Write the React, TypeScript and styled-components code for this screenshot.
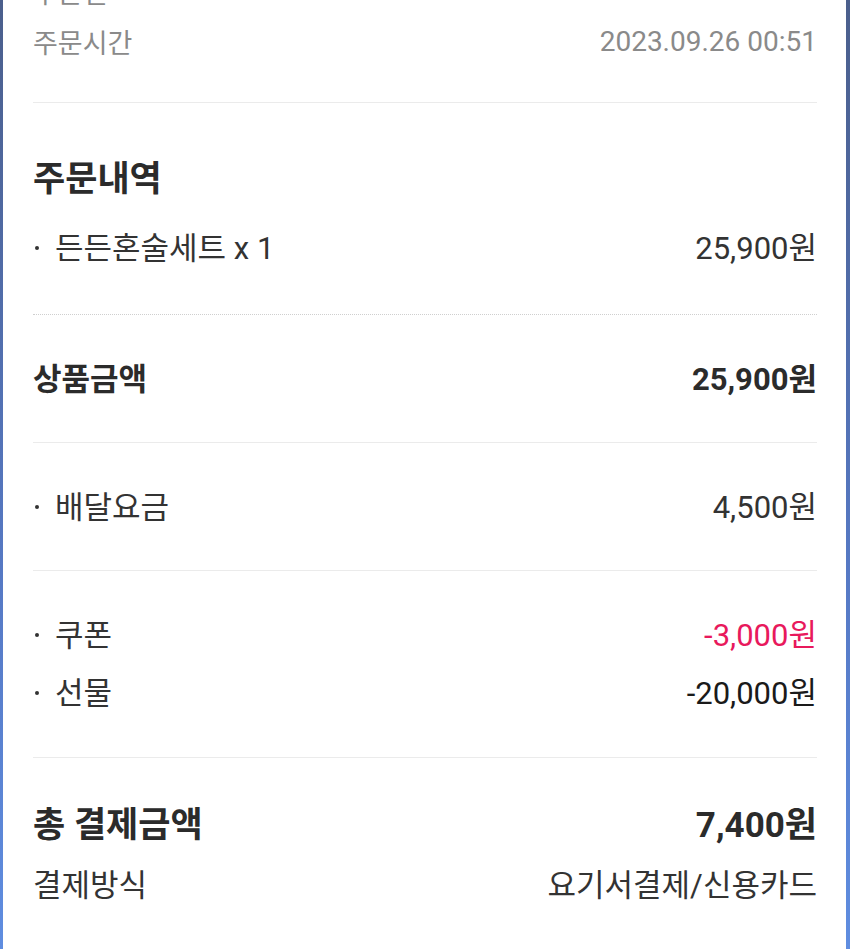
import React from "react";
import styled, { createGlobalStyle } from "styled-components";

const GlobalStyle = createGlobalStyle`
  html, body {
    margin: 0;
    padding: 0;
    background: #ffffff;
  }
  body {
    font-family: Roboto, "Noto Sans CJK KR", sans-serif;
    -webkit-font-smoothing: antialiased;
  }
`;

const Frame = styled.div`
  height: 949px;
  overflow: hidden;
  display: flex;
  background: linear-gradient(180deg, #4b5f8c 0%, #5679c4 60%, #5f8de0 100%);
`;

const Sheet = styled.div`
  flex: 1;
  margin: 0 4px 0 3px;
  background: #ffffff;
  padding: 0 29px 0 30px;
  display: flex;
  flex-direction: column;
`;

const Section = styled.section<{ $line?: "solid" | "dotted" | "none" }>`
  display: flex;
  flex-direction: column;
  gap: 18px;
  padding: 41px 0 46px;
  border-bottom: ${(p) =>
    p.$line === "dotted"
      ? "1px dotted #cfcfcf"
      : p.$line === "none"
      ? "none"
      : "1px solid #ebebeb"};
`;

const TopSection = styled(Section)`
  margin-top: -29px;
  padding: 0 0 41px;
  gap: 10px;
`;

const OrderSection = styled(Section)`
  padding: 52px 0 49px;
  gap: 30px;
`;

const DiscountSection = styled(Section)`
  padding-bottom: 47px;
`;

const TotalSection = styled(Section)`
  padding: 43px 0 0;
  gap: 21px;
`;

const Row = styled.div<{ $muted?: boolean; $bold?: boolean; $big?: boolean }>`
  display: flex;
  align-items: center;
  justify-content: space-between;
  height: 40px;
  font-size: ${(p) => (p.$muted ? "27px" : p.$big ? "35px" : "31px")};
  font-weight: ${(p) => (p.$bold ? 700 : 400)};
  color: ${(p) => (p.$muted ? "#8a8a8a" : p.$bold ? "#2b2b2b" : "#333333")};
  white-space: nowrap;
`;

const Label = styled.span`
  display: flex;
  align-items: center;
`;

const Stamp = styled.span`
  font-size: 28px;
`;

const Bullet = styled.span`
  width: 22px;
  height: 40px;
  display: flex;
  align-items: center;
  padding-top: 6px;
  box-sizing: border-box;

  &::before {
    content: "";
    width: 4px;
    height: 4px;
    margin-left: 2px;
    border-radius: 50%;
    background: #333333;
  }
`;

const Amount = styled.span<{ $tone?: "pink" | "black" }>`
  color: ${(p) =>
    p.$tone === "pink" ? "#e8195c" : p.$tone === "black" ? "#1a1a1a" : "inherit"};
`;

const Title = styled.h2`
  margin: 0;
  height: 40px;
  display: flex;
  align-items: center;
  font-size: 35px;
  font-weight: 700;
  color: #2b2b2b;
`;

export default function App() {
  return (
    <>
      <GlobalStyle />
      <Frame>
        <Sheet>
          <TopSection>
            <Row $muted>
              <Label>주문일</Label>
            </Row>
            <Row $muted>
              <Label>주문시간</Label>
              <Stamp>2023.09.26 00:51</Stamp>
            </Row>
          </TopSection>

          <OrderSection $line="dotted">
            <Title>주문내역</Title>
            <Row>
              <Label>
                <Bullet />든든혼술세트 x 1
              </Label>
              <Amount>25,900원</Amount>
            </Row>
          </OrderSection>

          <Section>
            <Row $bold>
              <Label>상품금액</Label>
              <Amount>25,900원</Amount>
            </Row>
          </Section>

          <Section>
            <Row>
              <Label>
                <Bullet />배달요금
              </Label>
              <Amount>4,500원</Amount>
            </Row>
          </Section>

          <DiscountSection>
            <Row>
              <Label>
                <Bullet />쿠폰
              </Label>
              <Amount $tone="pink">-3,000원</Amount>
            </Row>
            <Row>
              <Label>
                <Bullet />선물
              </Label>
              <Amount $tone="black">-20,000원</Amount>
            </Row>
          </DiscountSection>

          <TotalSection $line="none">
            <Row $bold $big>
              <Label>총 결제금액</Label>
              <Amount>7,400원</Amount>
            </Row>
            <Row>
              <Label>결제방식</Label>
              <span>요기서결제/신용카드</span>
            </Row>
          </TotalSection>
        </Sheet>
      </Frame>
    </>
  );
}
